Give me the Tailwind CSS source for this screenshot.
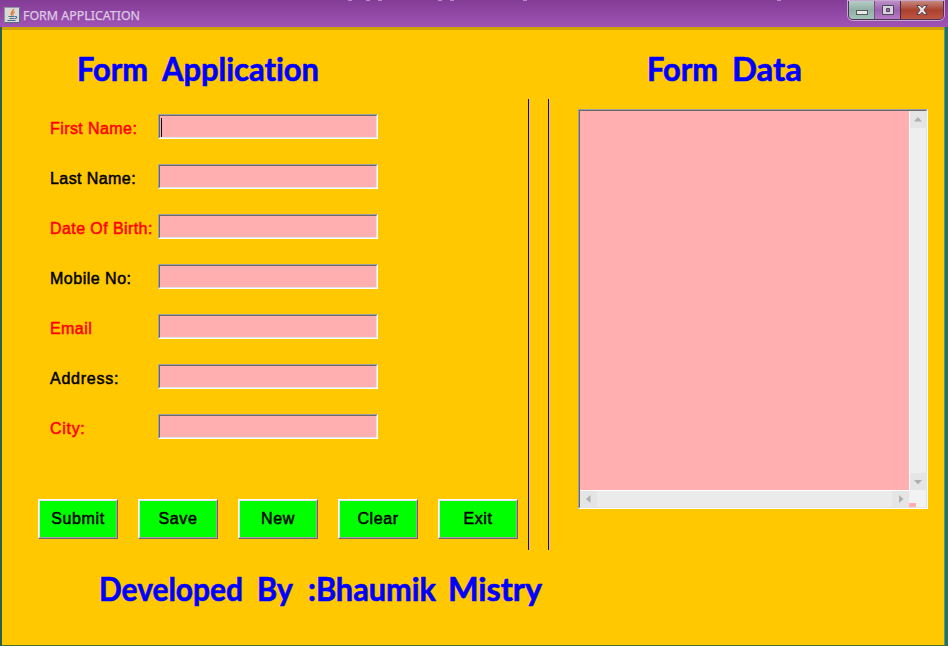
<!DOCTYPE html>
<html lang="en">
<head>
<meta charset="utf-8">
<title>FORM APPLICATION</title>
<script src="https://cdn.jsdelivr.net/npm/@tailwindcss/browser@4"></script>
</head>
<body class="w-[948px] h-[646px] overflow-hidden flex flex-col font-['Liberation_Sans',Arial,sans-serif] bg-[#ffc800]">
<header class="relative h-[27px] shrink-0 flex justify-between items-start bg-linear-to-b from-[#833c96] to-[#9f54b4] pl-1 pr-1">
  <div class="flex items-center pt-[6px]">
    <svg class="w-4 h-4 shrink-0" viewBox="0 0 16 16" fill="none">
      <rect x=".5" y=".5" width="15" height="15" fill="#d9d9d6" stroke="#8f9a9e"/>
      <path d="M.5 15.500H15.500V.5" stroke="#55707c"/>
      <path d="M9.500 1.800C10 4.300 5.500 4.800 7.800 8.500M10.800 4.800C8.300 5.500 8.500 6.500 9.300 8.500" stroke="#dd7a35" stroke-width="1.300"/>
      <path d="M4.500 9.500H10.500M5.500 11.500H10M3.500 13.500H11.500M11 9.500C13.500 9 13 11.500 10.500 11.800" stroke="#446f8c" stroke-width="1.100"/>
    </svg>
    <h1 class="ml-[3px] pt-0.5 text-[12px] leading-4 whitespace-nowrap font-['Noto_Sans','Open_Sans',sans-serif]"><svg class="block w-[120px] h-4"><text x="0" y="12" textLength="117" lengthAdjust="spacingAndGlyphs" fill="#ddc9e3" stroke="#ddc9e3" stroke-width=".25">FORM APPLICATION</text></svg></h1>
  </div>
  <div class="flex h-[19px] w-[96px] mt-px rounded-b-[5px] border border-t-0 border-[#4c3455] shadow-[0_0_0_1px_#c9a5d2] overflow-hidden">
    <div class="w-[26px] flex items-center justify-center bg-linear-to-b from-[#b5cec5] via-[#91aea4] to-[#a3c3b8] border-r border-[#76517f]">
      <svg class="w-3 h-5" viewBox="0 0 12 20"><rect x=".5" y="10.500" width="11" height="4" fill="#e8e8e8" stroke="#515c5a"/></svg>
    </div>
    <div class="w-[26px] flex items-center justify-center bg-linear-to-b from-[#bd8fc9] via-[#9c62ad] to-[#b77ac6] border-r border-[#4c2a34]">
      <svg class="w-3 h-5" viewBox="0 0 12 20"><path fill="#d9d0dc" stroke="#51475a" fill-rule="evenodd" d="M.5 5.500h11v9H.5zM4.500 8.500v3h3v-3z"/></svg>
    </div>
    <div class="flex-1 flex items-center justify-center bg-linear-to-b from-[#c5897f] via-[#aa402f] to-[#bd5642]">
      <svg class="w-3 h-5" viewBox="0 0 12 20"><path fill="#e6e4e4" stroke="#55454b" d="M.8 5.500H4L6 7.700 8 5.500h3.200L8 10l3.200 4.500H8L6 12.300 4 14.500H.8L4 10z"/></svg>
    </div>
  </div>
  <svg class="absolute left-[340px] top-0 w-[450px] h-px" viewBox="0 0 450 1" stroke="#b98bc5" stroke-width="2"><path d="M8 0h4M26 0h4M38 0h4M98 0h4M110 0h4M183 0h4M437 0h4"/></svg>
</header>
<main class="flex-1 min-h-0 flex border-l-2 border-l-[#26604f] border-b border-b-[#4f6c35]">
  <div class="flex-1 flex border-t-3 border-[#d1a404]">
    <section class="w-[526px] shrink-0 flex flex-col">
      <h2 class="mt-[15px] ml-[68px]"><svg class="block w-[260px] h-[50px] font-['Comic_Sans_MS','Lato',sans-serif] font-bold text-[32px] [font-variant-ligatures:none]" fill="#0000ff" stroke="#0000ff" stroke-width=".6" stroke-linejoin="round"><text x="7" y="35.500" textLength="71" lengthAdjust="spacingAndGlyphs">Form</text><text x="92" y="35.500" textLength="157" lengthAdjust="spacingAndGlyphs">Application</text></svg></h2>
      <form class="mt-[19px] ml-12 flex flex-col gap-[25px] text-[16px] tracking-[0.42px] whitespace-nowrap text-black [-webkit-text-stroke:0.5px]">
        <label class="flex h-[25px]"><span class="w-[108px] pt-1 leading-[22px] text-[#ff0000]">First Name:</span><span class="w-[220px] bg-[#ffafaf] border border-t-[#a0a0a0] border-l-[#a0a0a0] border-b-white border-r-white"><span class="block h-full pl-px pt-0.5 pb-px border border-t-[#696969] border-l-[#696969] border-b-[#e3e3e3] border-r-[#e3e3e3]"><span class="block w-px h-[19px] bg-black"></span></span></span></label>
        <label class="flex h-[25px]"><span class="w-[108px] pt-1 leading-[22px]">Last Name:</span><span class="w-[220px] bg-[#ffafaf] border border-t-[#a0a0a0] border-l-[#a0a0a0] border-b-white border-r-white"><span class="block h-full border border-t-[#696969] border-l-[#696969] border-b-[#e3e3e3] border-r-[#e3e3e3]"></span></span></label>
        <label class="flex h-[25px]"><span class="w-[108px] pt-1 leading-[22px] text-[#ff0000]">Date Of Birth:</span><span class="w-[220px] bg-[#ffafaf] border border-t-[#a0a0a0] border-l-[#a0a0a0] border-b-white border-r-white"><span class="block h-full border border-t-[#696969] border-l-[#696969] border-b-[#e3e3e3] border-r-[#e3e3e3]"></span></span></label>
        <label class="flex h-[25px]"><span class="w-[108px] pt-1 leading-[22px] tracking-[0.5px]">Mobile No:</span><span class="w-[220px] bg-[#ffafaf] border border-t-[#a0a0a0] border-l-[#a0a0a0] border-b-white border-r-white"><span class="block h-full border border-t-[#696969] border-l-[#696969] border-b-[#e3e3e3] border-r-[#e3e3e3]"></span></span></label>
        <label class="flex h-[25px]"><span class="w-[108px] pt-1 leading-[22px] text-[#ff0000]">Email</span><span class="w-[220px] bg-[#ffafaf] border border-t-[#a0a0a0] border-l-[#a0a0a0] border-b-white border-r-white"><span class="block h-full border border-t-[#696969] border-l-[#696969] border-b-[#e3e3e3] border-r-[#e3e3e3]"></span></span></label>
        <label class="flex h-[25px]"><span class="w-[108px] pt-1 leading-[22px] tracking-[0.75px]">Address:</span><span class="w-[220px] bg-[#ffafaf] border border-t-[#a0a0a0] border-l-[#a0a0a0] border-b-white border-r-white"><span class="block h-full border border-t-[#696969] border-l-[#696969] border-b-[#e3e3e3] border-r-[#e3e3e3]"></span></span></label>
        <label class="flex h-[25px]"><span class="w-[108px] pt-1 leading-[22px] tracking-[0.7px] text-[#ff0000]">City:</span><span class="w-[220px] bg-[#ffafaf] border border-t-[#a0a0a0] border-l-[#a0a0a0] border-b-white border-r-white"><span class="block h-full border border-t-[#696969] border-l-[#696969] border-b-[#e3e3e3] border-r-[#e3e3e3]"></span></span></label>
      </form>
      <div class="mt-[60px] ml-9 flex gap-5 text-[16px] leading-9 tracking-[0.6px] text-black [-webkit-text-stroke:0.5px]">
        <button class="w-20 h-10 bg-[#00ff00] border border-t-white border-l-white border-b-[#696969] border-r-[#696969]"><span class="block border border-t-[#e3e3e3] border-l-[#e3e3e3] border-b-[#a0a0a0] border-r-[#a0a0a0]">Submit</span></button>
        <button class="w-20 h-10 bg-[#00ff00] border border-t-white border-l-white border-b-[#696969] border-r-[#696969]"><span class="block border border-t-[#e3e3e3] border-l-[#e3e3e3] border-b-[#a0a0a0] border-r-[#a0a0a0]">Save</span></button>
        <button class="w-20 h-10 bg-[#00ff00] border border-t-white border-l-white border-b-[#696969] border-r-[#696969]"><span class="block border border-t-[#e3e3e3] border-l-[#e3e3e3] border-b-[#a0a0a0] border-r-[#a0a0a0]">New</span></button>
        <button class="w-20 h-10 bg-[#00ff00] border border-t-white border-l-white border-b-[#696969] border-r-[#696969]"><span class="block border border-t-[#e3e3e3] border-l-[#e3e3e3] border-b-[#a0a0a0] border-r-[#a0a0a0]">Clear</span></button>
        <button class="w-20 h-10 bg-[#00ff00] border border-t-white border-l-white border-b-[#696969] border-r-[#696969]"><span class="block border border-t-[#e3e3e3] border-l-[#e3e3e3] border-b-[#a0a0a0] border-r-[#a0a0a0]">Exit</span></button>
      </div>
      <footer class="mt-[26px] ml-[88px]"><svg class="block w-[460px] h-[50px] font-['Comic_Sans_MS','Lato',sans-serif] font-bold text-[32px] [font-variant-ligatures:none]" fill="#0000ff" stroke="#0000ff" stroke-width=".6" stroke-linejoin="round"><text x="9" y="35.500" textLength="144" lengthAdjust="spacingAndGlyphs">Developed</text><text x="167" y="35.500" textLength="36" lengthAdjust="spacingAndGlyphs">By</text><text x="218" y="35.500" textLength="128" lengthAdjust="spacingAndGlyphs">:Bhaumik</text><text x="358" y="35.500" textLength="94" lengthAdjust="spacingAndGlyphs">Mistry</text></svg></footer>
    </section>
    <div class="w-[21px] h-[451px] mt-[69px] shrink-0 border-x border-[#0000ff]"></div>
    <section class="flex flex-col pl-[29px]">
      <h2 class="mt-[15px] ml-[60px]"><svg class="block w-[200px] h-[50px] font-['Comic_Sans_MS','Lato',sans-serif] font-bold text-[32px]" fill="#0000ff" stroke="#0000ff" stroke-width=".6" stroke-linejoin="round"><text x="9" y="35.500" textLength="71" lengthAdjust="spacingAndGlyphs">Form</text><text x="94" y="35.500" textLength="70" lengthAdjust="spacingAndGlyphs">Data</text></svg></h2>
      <div class="mt-[14px] w-[350px] h-[400px] border border-t-[#a0a0a0] border-l-[#a0a0a0] border-b-white border-r-white">
        <div class="w-[348px] h-[398px] grid grid-cols-[329px_17px] grid-rows-[379px_17px] border border-t-[#696969] border-l-[#696969] border-b-[#e3e3e3] border-r-[#e3e3e3]">
          <div class="bg-[#ffafaf]"></div>
          <div class="flex flex-col justify-between bg-[#eeeeee] border-l border-white">
            <svg class="w-4 h-[17px] bg-[#e5e5e5]" viewBox="0 0 16 17"><path d="M4 10.500L8 6l4 4.500z" fill="#b0b0b0"/></svg>
            <svg class="w-4 h-[17px] bg-[#e5e5e5]" viewBox="0 0 16 17"><path d="M4 7l4 4.500L12 7z" fill="#b0b0b0"/></svg>
          </div>
          <div class="flex justify-between bg-[#ebebeb] border-t border-white">
            <svg class="w-[17px] h-4 bg-[#e5e5e5]" viewBox="0 0 17 16"><path d="M10.500 4L6 8l4.500 4z" fill="#b0b0b0"/></svg>
            <svg class="w-[17px] h-4 bg-[#e5e5e5]" viewBox="0 0 17 16"><path d="M7 4l4.500 4L7 12z" fill="#b0b0b0"/></svg>
          </div>
          <div class="flex items-end bg-[#f2f2f2]"><span class="w-[7px] h-1 bg-[#ffafaf]"></span></div>
        </div>
      </div>
    </section>
  </div>
  <div class="w-1 shrink-0 bg-[#286f60] border-l border-[#4b9c87]"></div>
</main>
</body>
</html>
